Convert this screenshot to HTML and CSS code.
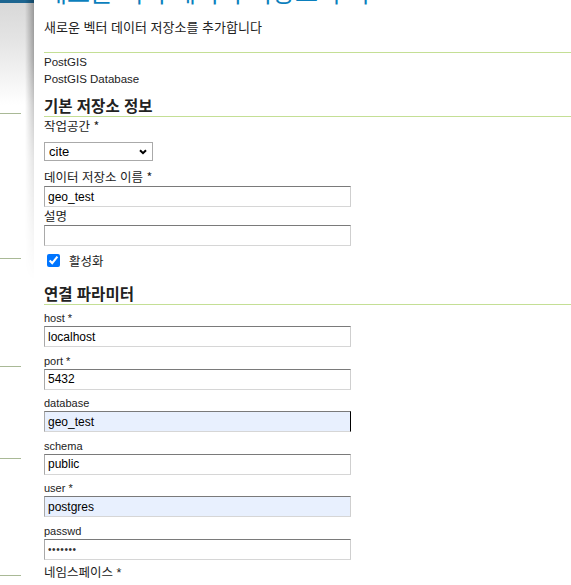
FILE: index.html
```html
<!DOCTYPE html>
<html lang="ko">
<head>
<meta charset="utf-8">
<title>새로운 벡터 데이터 저장소 추가</title>
<link rel="stylesheet" href="styles.css">
</head>
<body>
<div class="desktop">
  <aside class="backdrop">
    <div class="backdrop-bar"></div>
    <div class="menu-group"></div>
    <div class="menu-group"></div>
    <div class="menu-group"></div>
    <div class="menu-group"></div>
    <div class="menu-group"></div>
  </aside>
  <main class="panel">
    <header class="panel-head">
      <h2 class="panel-title">새로운 벡터 데이터 저장소 추가</h2>
      <p class="panel-sub">새로운 벡터 데이터 저장소를 추가합니다</p>
    </header>
    <div class="store-type">
      <div>PostGIS</div>
      <div>PostGIS Database</div>
    </div>

    <h3 class="section-title first">기본 저장소 정보</h3>
    <label class="field-label ws-label">작업공간 *</label>
    <div class="select-wrap">
      <select class="select">
        <option>cite</option>
      </select>
      <svg class="select-arrow" width="8" height="6" viewBox="0 0 8 6"><path d="M1 1.2 L4 4.2 L7 1.2" fill="none" stroke="#000" stroke-width="2"/></svg>
    </div>
    <label class="field-label gap-lg">데이터 저장소 이름 *</label>
    <input class="text-input ko-input" type="text" value="geo_test">
    <label class="field-label">설명</label>
    <input class="text-input ko-input" type="text" value="">
    <div class="check-row">
      <input class="check" type="checkbox" checked>
      <span class="check-label">활성화</span>
    </div>

    <h3 class="section-title second">연결 파라미터</h3>
    <div class="param first-param">
      <label class="param-label">host *</label>
      <input class="text-input" type="text" value="localhost">
    </div>
    <div class="param">
      <label class="param-label">port *</label>
      <input class="text-input" type="text" value="5432">
    </div>
    <div class="param">
      <label class="param-label">database</label>
      <input class="text-input autofill focus-edge" type="text" value="geo_test">
    </div>
    <div class="param">
      <label class="param-label">schema</label>
      <input class="text-input" type="text" value="public">
    </div>
    <div class="param">
      <label class="param-label">user *</label>
      <input class="text-input autofill" type="text" value="postgres">
    </div>
    <div class="param">
      <label class="param-label">passwd</label>
      <input class="text-input secret" type="password" value="1234567">
    </div>
    <div class="param">
      <label class="param-label ko">네임스페이스 *</label>
    </div>
  </main>
</div>
</body>
</html>
```

FILE: styles.css
```css
html, body {
  margin: 0;
  padding: 0;
  background: #fff;
  overflow: hidden;
}

body {
  font-family: "Liberation Sans", "Noto Sans CJK KR", sans-serif;
  color: #222;
}

.desktop {
  display: flex;
  width: 571px;
  height: 585px;
  overflow: hidden;
}

/* background page remnant on the left */
.backdrop {
  width: 34px;
  flex-shrink: 0;
  display: flex;
  flex-direction: column;
  background: linear-gradient(to bottom, #d8d8d8 3px, #e4e4e4 40px, #fff 105px);
}

.backdrop-bar {
  height: 3px;
  background: #1d6590;
}

.menu-group {
  width: 21px;
  border-bottom: 1px solid #a9b996;
}
.menu-group:nth-child(2) { height: 110px; }
.menu-group:nth-child(3) { height: 144px; }
.menu-group:nth-child(4) { height: 107px; }
.menu-group:nth-child(5) { height: 91px; }
.menu-group:nth-child(6) { height: 116px; }

/* dialog panel */
.panel {
  position: relative;
  flex: 1;
  min-width: 0;
  padding-left: 10px;
  background: #fff;
}

.panel::before {
  content: "";
  position: absolute;
  left: -9px;
  top: 0;
  width: 9px;
  height: 300px;
  background: linear-gradient(to right, rgba(0,0,0,0), rgba(0,0,0,0.3));
  -webkit-mask-image: linear-gradient(to bottom, #000 60px, rgba(0,0,0,0.35) 160px, transparent 280px);
  mask-image: linear-gradient(to bottom, #000 60px, rgba(0,0,0,0.35) 160px, transparent 280px);
}

.panel-head {
  padding-bottom: 17px;
  border-bottom: 1px solid #c4df95;
}

.panel-title {
  margin: -24px 0 0;
  font-family: "Noto Sans CJK KR", sans-serif;
  font-size: 25px;
  line-height: 30px;
  font-weight: normal;
  color: #0b7fbd;
  white-space: nowrap;
}

.panel-sub {
  margin: 13px 0 0;
  font-family: "Noto Sans CJK KR", sans-serif;
  font-size: 13px;
  line-height: 16px;
  color: #222;
}

.store-type {
  margin-top: 1px;
  font-size: 11.5px;
  line-height: 17px;
  color: #222;
}

.section-title {
  margin: 8px 0 0;
  padding-bottom: 2px;
  border-bottom: 1px solid #c4df95;
  font-family: "Noto Sans CJK KR", sans-serif;
  font-size: 15.5px;
  line-height: 18px;
  font-weight: bold;
  color: #222;
}
.section-title.second { margin-top: 17px; }

.field-label {
  display: block;
  margin-top: 1.5px;
  font-family: "Noto Sans CJK KR", sans-serif;
  font-size: 12.5px;
  line-height: 14px;
  color: #222;
}
.field-label.gap-lg { margin-top: 8.5px; }

.select-wrap {
  position: relative;
  width: 109px;
  margin-top: 9.5px;
}

.select {
  display: block;
  width: 109px;
  height: 19px;
  margin: 0;
  padding: 0 0 0 4px;
  border: 1px solid #aaa;
  border-radius: 0;
  background: #fff;
  -webkit-appearance: none;
  appearance: none;
  font-family: "Liberation Sans", sans-serif;
  font-size: 13px;
  color: #000;
}

.select-arrow {
  position: absolute;
  right: 6px;
  top: 7px;
}

.text-input {
  display: block;
  box-sizing: border-box;
  width: 307px;
  height: 21px;
  margin: 0;
  padding: 0 3px;
  border: 1px solid;
  border-color: #7a7a7a #cfcfcf #d6d6d6 #a9a9a9;
  border-radius: 0;
  background: #fff;
  font-family: "Liberation Sans", sans-serif;
  font-size: 12px;
  color: #000;
  outline: none;
}
.ko-input { margin-top: 2.5px; }

.text-input.autofill { background: #e8f0fe; }
.text-input.focus-edge { border-right-color: #000; }
.text-input.secret { font-size: 10px; letter-spacing: 0.6px; color: #333; }

.check-row {
  display: flex;
  align-items: center;
  height: 13px;
  margin-top: 8px;
}

.check {
  width: 13px;
  height: 13px;
  margin: 0 0 0 3px;
  accent-color: #0075ff;
}

.check-label {
  margin-left: 9px;
  font-family: "Noto Sans CJK KR", sans-serif;
  font-size: 12.5px;
  line-height: 14px;
  color: #222;
}

.param { margin-top: 6.5px; }
.param.first-param { margin-top: 6px; }

.param-label {
  display: block;
  margin-bottom: 1px;
  font-family: "Liberation Sans", "Noto Sans CJK KR", sans-serif;
  font-size: 11px;
  line-height: 14px;
  color: #222;
}
.param-label.ko { font-size: 12.5px; }
```
